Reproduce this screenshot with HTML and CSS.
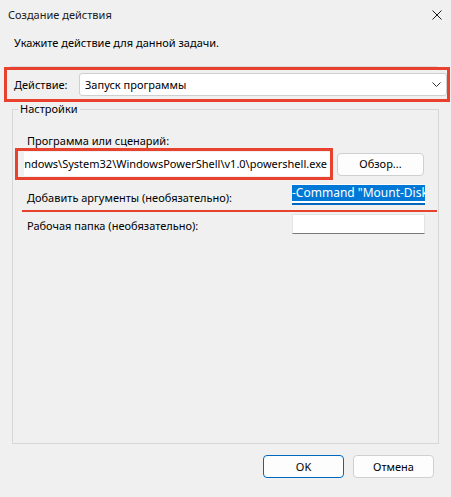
FILE: index.html
```html
<!DOCTYPE html>
<html lang="ru">
<head>
  <meta charset="UTF-8" />
  <meta name="viewport" content="width=device-width, initial-scale=1.0" />
  <title>Создание действия</title>
  <link rel="stylesheet" href="styles.css">
</head>
<body>
  <div class="dialog">
    <div class="titlebar">
      <span class="title">Создание действия</span>
      <svg class="close" width="10" height="10" viewBox="0 0 10 10">
        <path d="M0.5 0.5 L9.5 9.5 M9.5 0.5 L0.5 9.5" stroke="#1a1a1a" stroke-width="1" fill="none" />
      </svg>
    </div>

    <p class="prompt">Укажите действие для данной задачи.</p>
    <div class="rule"></div>

    <div class="action mark">
      <span class="action-label">Действие:</span>
      <div class="combo">
        <span>Запуск программы</span>
        <svg class="chevron" width="9" height="5" viewBox="0 0 9 5">
          <path d="M0.5 0.5 L4.5 4.5 L8.5 0.5" stroke="#333" stroke-width="1" fill="none" />
        </svg>
      </div>
    </div>

    <fieldset class="settings">
      <legend>Настройки</legend>

      <div class="field-label first">Программа или сценарий:</div>
      <div class="program-row">
        <div class="program mark">
          <div class="textbox path"><span>C:\Windows\System32\WindowsPowerShell\v1.0\powershell.exe</span></div>
        </div>
        <button class="btn browse">Обзор...</button>
      </div>

      <div class="arg-row">
        <span class="field-label args-label">Добавить аргументы (необязательно):</span>
        <div class="textbox args focused"><span class="selected">-Command "Mount-DiskImage -ImagePath 'D:\disk.vhdx'"</span></div>
      </div>
      <div class="red-line"></div>

      <div class="arg-row dir-row">
        <span class="field-label dir-label">Рабочая папка (необязательно):</span>
        <div class="textbox args"></div>
      </div>
    </fieldset>

    <div class="buttons">
      <button class="btn default">OK</button>
      <button class="btn">Отмена</button>
    </div>
  </div>
</body>
</html>
```

FILE: styles.css
```css
* {
  box-sizing: border-box;
}
body {
  margin: 0;
  background: #f0f0f0;
  font-family: "Noto Sans", "Segoe UI", sans-serif;
  font-size: 11px;
  color: #000;
}
.dialog {
  width: 451px;
  height: 497px;
}

.titlebar {
  height: 30px;
  display: flex;
  align-items: center;
  justify-content: space-between;
  padding: 0 9px 0 8px;
}
.title {
  color: #1a1a1a;
  line-height: 16px;
}

.prompt {
  margin: 5px 0 0 14px;
  line-height: 16px;
}
.rule {
  height: 1px;
  background: #dadada;
  margin: 15px 0 0 10px;
  width: 427px;
}

.mark {
  border: 3px solid #e8412d;
}

.action {
  margin-left: 4px;
  width: 446px;
  height: 35px;
  display: flex;
  align-items: center;
  padding-left: 7px;
}
.action-label {
  width: 65px;
  line-height: 16px;
}
.combo {
  flex: 1;
  height: 23px;
  background: #fff;
  border: 1px solid #cfcfcf;
  border-radius: 3px;
  display: flex;
  align-items: center;
  justify-content: space-between;
  padding: 0 5px 0 5px;
  line-height: 16px;
}

.settings {
  margin: 0 0 0 12px;
  padding: 0 13px 0 0;
  width: 427px;
  height: 342px;
  border: 1px solid #d4d8d6;
  min-width: 0;
}
.settings legend {
  margin-left: 5px;
  padding: 0 2px;
  line-height: 14px;
}

.field-label {
  line-height: 16px;
  margin-left: 14px;
}
.field-label.first {
  margin-top: 17px;
}

.program-row {
  display: flex;
  align-items: center;
  margin-top: -1px;
}
.program {
  margin-left: 2px;
  width: 318px;
  height: 32px;
  padding: 1px 0 0 6px;
}
.textbox {
  background: #fff;
  height: 24px;
  display: flex;
  align-items: center;
  overflow: hidden;
  white-space: nowrap;
  line-height: 16px;
}
.path {
  justify-content: flex-end;
  padding-right: 3px;
}

.btn {
  font-family: inherit;
  font-size: 11px;
  color: #000;
  background: #fdfdfd;
  border: 1px solid #d0d0d0;
  border-radius: 4px;
  height: 23px;
  padding: 0;
  line-height: 16px;
}
.browse {
  margin-left: 4px;
  width: 87px;
}

.arg-row {
  display: flex;
  align-items: flex-start;
  justify-content: space-between;
  margin-top: 4px;
}
.args-label {
  padding-top: 6px;
}
.dir-label {
  padding-top: 4px;
}
.args {
  width: 133px;
  height: 20px;
  border: 1px solid #e3e3e3;
  border-bottom-color: #7a7a7a;
}
.args.focused {
  height: 21px;
  border: none;
  border-bottom: 2px solid #0067c0;
  padding: 1px 0 0 2px;
  align-items: flex-start;
}
.selected {
  background: #0078d7;
  color: #fff;
  font-size: 12px;
  line-height: 16px;
  margin-left: -2px;
}
.red-line {
  height: 2px;
  background: #e8412d;
  margin: 4px 0 0 9px;
  width: 415px;
}
.dir-row {
  margin-top: 2px;
}

.buttons {
  display: flex;
  justify-content: flex-end;
  gap: 9px;
  margin: 11px 17px 0 0;
}
.buttons .btn {
  width: 81px;
}
.btn.default {
  border-color: #0067c0;
}
```
